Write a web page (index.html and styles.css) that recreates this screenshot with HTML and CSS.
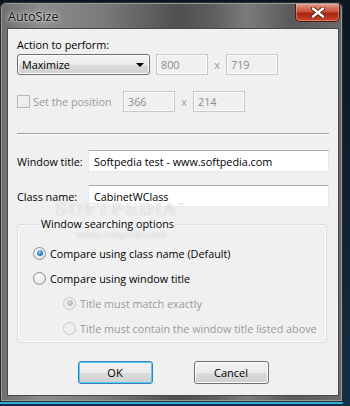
FILE: index.html
```html
<!DOCTYPE html>
<html lang="en">
<head>
  <meta charset="UTF-8">
  <title>AutoSize</title>
  <link rel="stylesheet" href="styles.css">
</head>
<body>
  <div class="window">
    <!-- Заголовок окна -->
    <div class="titlebar">
      <span class="title">AutoSize</span>
      <div class="close-btn">
        <svg width="14" height="11" viewBox="0 0 14 11">
          <path d="M2 1.5 L12 9.5 M12 1.5 L2 9.5" stroke="#4a1a14" stroke-width="4" stroke-linecap="round"/>
          <path d="M2 1.5 L12 9.5 M12 1.5 L2 9.5" stroke="#fff" stroke-width="2.4" stroke-linecap="round"/>
        </svg>
      </div>
    </div>

    <div class="client">
      <div class="label">Action to perform:</div>
      <div class="row row-action">
        <div class="select">Maximize<span class="arrow"></span></div>
        <div class="field disabled size">800</div>
        <span class="times">x</span>
        <div class="field disabled size">719</div>
      </div>

      <div class="row row-pos">
        <div class="check">
          <span class="box"></span>
          <span>Set the position</span>
        </div>
        <div class="field disabled size">366</div>
        <span class="times">x</span>
        <div class="field disabled size">214</div>
      </div>

      <div class="sep"></div>

      <div class="row row-title">
        <span class="field-label">Window title:</span>
        <div class="field wide">Softpedia test - www.softpedia.com</div>
      </div>
      <div class="row row-class">
        <span class="field-label">Class name:</span>
        <div class="field wide">CabinetWClass</div>
      </div>

      <fieldset class="group">
        <legend>Window searching options</legend>
        <div class="radio checked"><span class="dot"></span>Compare using class name (Default)</div>
        <div class="radio"><span class="dot"></span>Compare using window title</div>
        <div class="radio sub disabled checked"><span class="dot"></span>Title must match exactly</div>
        <div class="radio sub disabled"><span class="dot"></span>Title must contain the window title listed above</div>
      </fieldset>

      <div class="buttons">
        <button class="btn default">OK</button>
        <button class="btn">Cancel</button>
      </div>

      <div class="watermark">SOFTPEDIA<sup>™</sup></div>
      <div class="watermark-url">www.softpedia.com</div>
    </div>
  </div>
</body>
</html>
```

FILE: styles.css
```css
/* Фон рабочего стола */
body {
  margin: 0;
  height: 406px;
  overflow: hidden;
  background: linear-gradient(180deg, #0b1622, #0f2436 60%, #123049);
  font-family: "Open Sans", Arial, sans-serif;
  font-size: 10.8px;
  color: #000;
}

/* Окно в стиле Aero */
.window {
  position: relative;
  width: 343px;
  height: 400px;
  margin-top: 2px;
  border-radius: 7px 7px 0 0;
  background: linear-gradient(90deg, #6e6e6e 0%, #8c8c8c 12%, #7a7a7a 30%, #4f4f4f 52%, #5e5e5e 62%, #7b7b7b 72%, #5a5a5a 85%, #6a6a6a 100%);
  box-shadow: inset 0 0 0 1px #2a2a2a, inset 0 0 0 2px #9a9a9a;
  border-bottom: 2px solid #2ab0d8;
}

.titlebar {
  display: flex;
  align-items: flex-start;
  height: 26px;
}

.title {
  margin: 6px 0 0 8px;
  font-size: 12.5px;
  color: #111;
  text-shadow: 0 0 6px rgba(255, 255, 255, 0.8), 0 0 2px rgba(255, 255, 255, 0.9);
}

.close-btn {
  display: flex;
  justify-content: center;
  align-items: center;
  width: 43px;
  height: 17px;
  margin: 2px 3px 0 auto;
  border: 1px solid #4a1c14;
  border-top: none;
  border-radius: 0 0 5px 5px;
  background: linear-gradient(180deg, #e49a86 0%, #c9503a 45%, #a8260f 55%, #c8462a 100%);
  box-shadow: inset 0 0 0 1px rgba(255, 200, 180, 0.4);
}

/* Клиентская область */
.client {
  position: relative;
  width: 332px;
  height: 368px;
  box-sizing: border-box;
  margin-left: 7px;
  padding-left: 9px;
  border: 1px solid #4a4a4a;
  background: #f0f0f0;
  overflow: hidden;
  white-space: nowrap;
}

.label {
  margin-top: 9px;
  line-height: 14px;
}

.row {
  display: flex;
  align-items: center;
  height: 21px;
}

.row-action {
  margin-top: 2px;
}

.row-pos {
  margin-top: 16px;
}

.select {
  position: relative;
  width: 133px;
  height: 21px;
  box-sizing: border-box;
  padding: 2px 0 0 4px;
  border: 1px solid #707070;
  border-radius: 3px;
  background: linear-gradient(180deg, #f3f3f3 0%, #ebebeb 50%, #dddddd 51%, #cfcfcf 100%);
  box-shadow: inset 0 0 0 1px #fcfcfc;
}

.arrow {
  position: absolute;
  right: 5px;
  top: 8px;
  border-left: 4px solid transparent;
  border-right: 4px solid transparent;
  border-top: 4px solid #000;
}

.field {
  height: 21px;
  box-sizing: border-box;
  padding: 2px 0 0 4px;
  border: 1px solid #e3e9ef;
  border-top-color: #abadb3;
  background: #fff;
}

.field.disabled {
  border: 1px solid #c8c8c8;
  background: #f0f0f0;
  color: #8d8d8d;
  box-shadow: inset 0 0 0 1px #fafafa;
}

.size {
  width: 52px;
}

.row-action .select {
  margin-right: 6px;
}

.times {
  width: 18px;
  text-align: center;
  color: #9a9a9a;
}

.check {
  display: flex;
  align-items: center;
  width: 106px;
  color: #9a9a9a;
}

.check .box {
  width: 11px;
  height: 11px;
  margin-right: 3px;
  border: 1px solid #b8b8b8;
  background: linear-gradient(135deg, #f4f4f4, #e8e8e8);
}

.sep {
  width: 312px;
  margin-top: 21px;
  border-top: 1px solid #a0a0a0;
  border-bottom: 1px solid #fff;
}

.row-title {
  margin-top: 15px;
  height: 22px;
}

.row-class {
  margin-top: 13px;
  height: 22px;
}

.field-label {
  width: 71px;
}

.field.wide {
  width: 241px;
  height: 22px;
  padding-top: 3px;
  padding-left: 5px;
}

/* Группа опций */
.group {
  width: 310px;
  box-sizing: border-box;
  margin: 10px 0 0;
  padding: 4px 0 6px 15px;
  border: 1px solid #d5dfe5;
  border-radius: 3px;
  box-shadow: inset 0 0 0 1px #fbfbfb;
}

.group legend {
  padding: 0 2px;
  margin-left: 6px;
  line-height: 14px;
}

.radio {
  display: flex;
  align-items: center;
  height: 16px;
  margin-top: 9px;
}

.radio:first-of-type {
  margin-top: 10px;
}

.radio .dot {
  position: relative;
  width: 11px;
  height: 11px;
  margin-right: 4px;
  border: 1px solid #8f8f8f;
  border-radius: 50%;
  background: radial-gradient(circle at 40% 35%, #fdfdfd, #dcdcdc);
}

.radio.checked .dot::after {
  content: "";
  position: absolute;
  left: 2.5px;
  top: 2.5px;
  width: 6px;
  height: 6px;
  border-radius: 50%;
  background: radial-gradient(circle at 40% 35%, #8fd0f5, #1b6fb5 70%, #0c4a86);
}

.radio.sub {
  padding-left: 30px;
}

.radio.disabled {
  color: #9a9a9a;
}

.radio.disabled .dot {
  border-color: #c6c6c6;
  background: #efefef;
}

.radio.disabled.checked .dot::after {
  background: radial-gradient(circle at 40% 35%, #dadada, #a8a8a8);
}

/* Кнопки */
.buttons {
  display: flex;
  justify-content: center;
  gap: 41px;
  margin: 18px 9px 0 0;
}

.btn {
  width: 75px;
  height: 23px;
  font-family: inherit;
  font-size: 11px;
  color: #000;
  border: 1px solid #707070;
  border-radius: 3px;
  background: linear-gradient(180deg, #f2f2f2 0%, #ebebeb 50%, #dddddd 51%, #cfcfcf 100%);
  box-shadow: inset 0 0 0 1px #fcfcfc;
}

.btn.default {
  border-color: #3c7fb1;
  box-shadow: inset 0 0 0 1px #48d0f8;
}

/* Водяной знак */
.watermark {
  position: absolute;
  left: 47px;
  top: 170px;
  font-family: "DejaVu Serif", serif;
  font-size: 17px;
  font-weight: bold;
  letter-spacing: 1px;
  color: rgba(255, 255, 255, 0.7);
  text-shadow: 0 0 1px rgba(110, 110, 110, 0.45);
}

.watermark sup {
  font-size: 7px;
}

.watermark-url {
  position: absolute;
  left: 69px;
  top: 199px;
  font-size: 9px;
  font-weight: bold;
  color: rgba(255, 255, 255, 0.7);
  text-shadow: 0 0 1px rgba(110, 110, 110, 0.4);
}
```
